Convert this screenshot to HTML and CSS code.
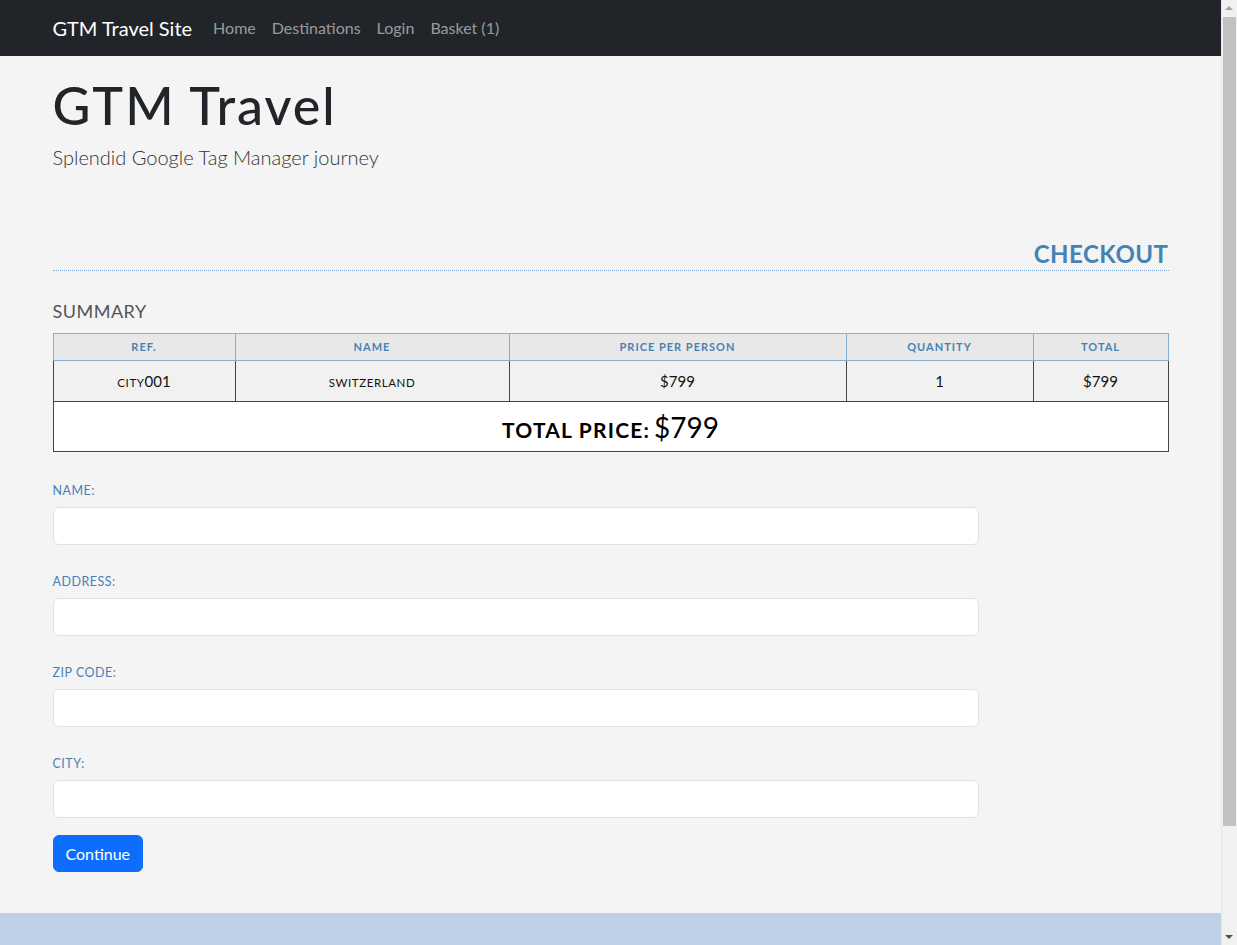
FILE: index.html
```html
<!DOCTYPE html>
<html lang="en">
<head>
<meta charset="utf-8">
<title>GTM Travel - Checkout</title>
<link rel="stylesheet" href="styles.css">
</head>
<body>
<nav class="navbar">
  <div class="container nav-inner">
    <a class="brand" href="#">GTM Travel Site</a>
    <ul class="nav-links">
      <li><a href="#">Home</a></li>
      <li><a href="#">Destinations</a></li>
      <li><a href="#">Login</a></li>
      <li><a href="#">Basket (1)</a></li>
    </ul>
  </div>
</nav>
<main class="container">
  <header class="hero">
    <h1 class="hero-title">GTM Travel</h1>
    <p class="hero-sub">Splendid Google Tag Manager journey</p>
  </header>
  <h2 class="page-title">CHECKOUT</h2>
  <h3 class="section-title">SUMMARY</h3>
  <table class="summary">
    <thead>
      <tr>
        <th class="c-ref">Ref.</th>
        <th class="c-name">Name</th>
        <th class="c-price">Price per person</th>
        <th class="c-qty">Quantity</th>
        <th class="c-total">Total</th>
      </tr>
    </thead>
    <tbody>
      <tr class="item">
        <td><span class="smcap">city</span>001</td>
        <td><span class="smcap">switzerland</span></td>
        <td>$799</td>
        <td>1</td>
        <td>$799</td>
      </tr>
      <tr class="grand">
        <td colspan="5"><span class="grand-label">Total price:</span> <span class="grand-value">$799</span></td>
      </tr>
    </tbody>
  </table>
  <form class="checkout-form">
    <div class="field">
      <label for="name">Name:</label>
      <input id="name" type="text">
    </div>
    <div class="field">
      <label for="address">Address:</label>
      <input id="address" type="text">
    </div>
    <div class="field">
      <label for="zip">Zip code:</label>
      <input id="zip" type="text">
    </div>
    <div class="field">
      <label for="city">City:</label>
      <input id="city" type="text">
    </div>
    <button type="button" class="btn">Continue</button>
  </form>
</main>
<footer class="footer"></footer>
<div class="scrollbar" aria-hidden="true">
  <span class="sb-arrow sb-up"></span>
  <span class="sb-thumb"></span>
  <span class="sb-arrow sb-down"></span>
</div>
</body>
</html>
```
FILE: styles.css
```css
* { box-sizing: border-box; }
html, body { margin: 0; padding: 0; }
body {
  background: #f4f4f4;
  font-family: "Segoe UI", "Lato", "Noto Sans", sans-serif;
  color: #212529;
  font-size: 16px;
  line-height: 1.5;
  padding-right: 16px;
}
.container {
  width: 1116px;
  margin: 0 auto;
}
.navbar {
  background: #212529;
  height: 56px;
}
.nav-inner {
  display: flex;
  align-items: center;
  height: 56px;
}
.brand {
  color: #fff;
  text-decoration: none;
  font-size: 20px;
  margin-right: 21px;
}
.nav-links {
  list-style: none;
  margin: 0;
  padding: 0;
  display: flex;
  gap: 16px;
}
.nav-links a {
  color: rgba(255,255,255,0.55);
  text-decoration: none;
  font-size: 16px;
}
.hero { padding-top: 18px; }
.hero-title {
  margin: 0;
  font-size: 52px;
  font-weight: 500;
  letter-spacing: 2px;
  line-height: 1.2;
}
.hero-sub {
  margin: 6px 0 0;
  font-size: 20px;
  font-weight: 300;
  color: #333;
}
.page-title {
  margin: 66px 0 0;
  text-align: right;
  color: #4682b4;
  font-size: 24px;
  font-weight: 700;
  letter-spacing: 0.5px;
  line-height: 32px;
  border-bottom: 1px dotted #7fa9d3;
}
.section-title {
  margin: 26px 0 8px;
  font-size: 18px;
  font-weight: 400;
  color: #555;
  letter-spacing: 0.5px;
  line-height: 28px;
}
.summary {
  width: 100%;
  border-collapse: collapse;
  text-align: center;
}
.summary th {
  background: #e8e8e8;
  color: #4682b4;
  font-size: 11px;
  font-weight: 700;
  text-transform: uppercase;
  letter-spacing: 1px;
  border: 1px solid #86afd4;
  height: 27px;
  padding: 0 4px;
}
.c-ref { width: 182px; }
.c-name { width: 274px; }
.c-price { width: 337px; }
.c-qty { width: 187px; }
.summary td {
  border: 1px solid #444;
  font-size: 15px;
  color: #111;
  padding: 0 4px;
}
.summary .item td {
  background: #f1f1f1;
  height: 41px;
}
.smcap {
  text-transform: uppercase;
  font-size: 11.5px;
  letter-spacing: 0.6px;
}
.grand td {
  background: #fff;
  height: 50px;
}
.grand-label {
  text-transform: uppercase;
  font-weight: 700;
  font-size: 21px;
  letter-spacing: 1.2px;
  color: #000;
}
.grand-value {
  font-size: 28px;
  color: #000;
}
.checkout-form {
  width: 926px;
  padding-top: 29px;
}
.field { margin-bottom: 27px; }
.field label {
  display: block;
  text-transform: uppercase;
  color: #4a7fb5;
  font-size: 12.5px;
  letter-spacing: 0.5px;
  line-height: 20px;
  margin-bottom: 6px;
}
.field input {
  display: block;
  width: 100%;
  height: 38px;
  border: 1px solid #dee2e6;
  border-radius: 6px;
  background: #fff;
  font-size: 16px;
  padding: 6px 12px;
}
.btn {
  display: block;
  margin-top: -10px;
  background: #0d6efd;
  color: #fff;
  border: 1px solid #0d6efd;
  border-radius: 6px;
  font-family: inherit;
  font-size: 16px;
  height: 37px;
  padding: 0 12px;
  cursor: pointer;
}
.footer {
  margin-top: 41px;
  height: 160px;
  background: #c0d0e6;
}
.scrollbar {
  position: fixed;
  top: 0;
  right: 0;
  width: 16px;
  height: 100%;
  background: #f1f1f1;
  border-left: 1px solid #e8e8e8;
}
.sb-arrow {
  position: absolute;
  left: 3px;
  width: 0;
  height: 0;
  border-left: 4px solid transparent;
  border-right: 4px solid transparent;
}
.sb-up {
  top: 6px;
  border-bottom: 4px solid #a3a3a3;
}
.sb-down {
  bottom: 6px;
  border-top: 4px solid #505050;
}
.sb-thumb {
  position: absolute;
  top: 17px;
  left: 1px;
  width: 13px;
  height: 809px;
  background: #c1c1c1;
}
```
